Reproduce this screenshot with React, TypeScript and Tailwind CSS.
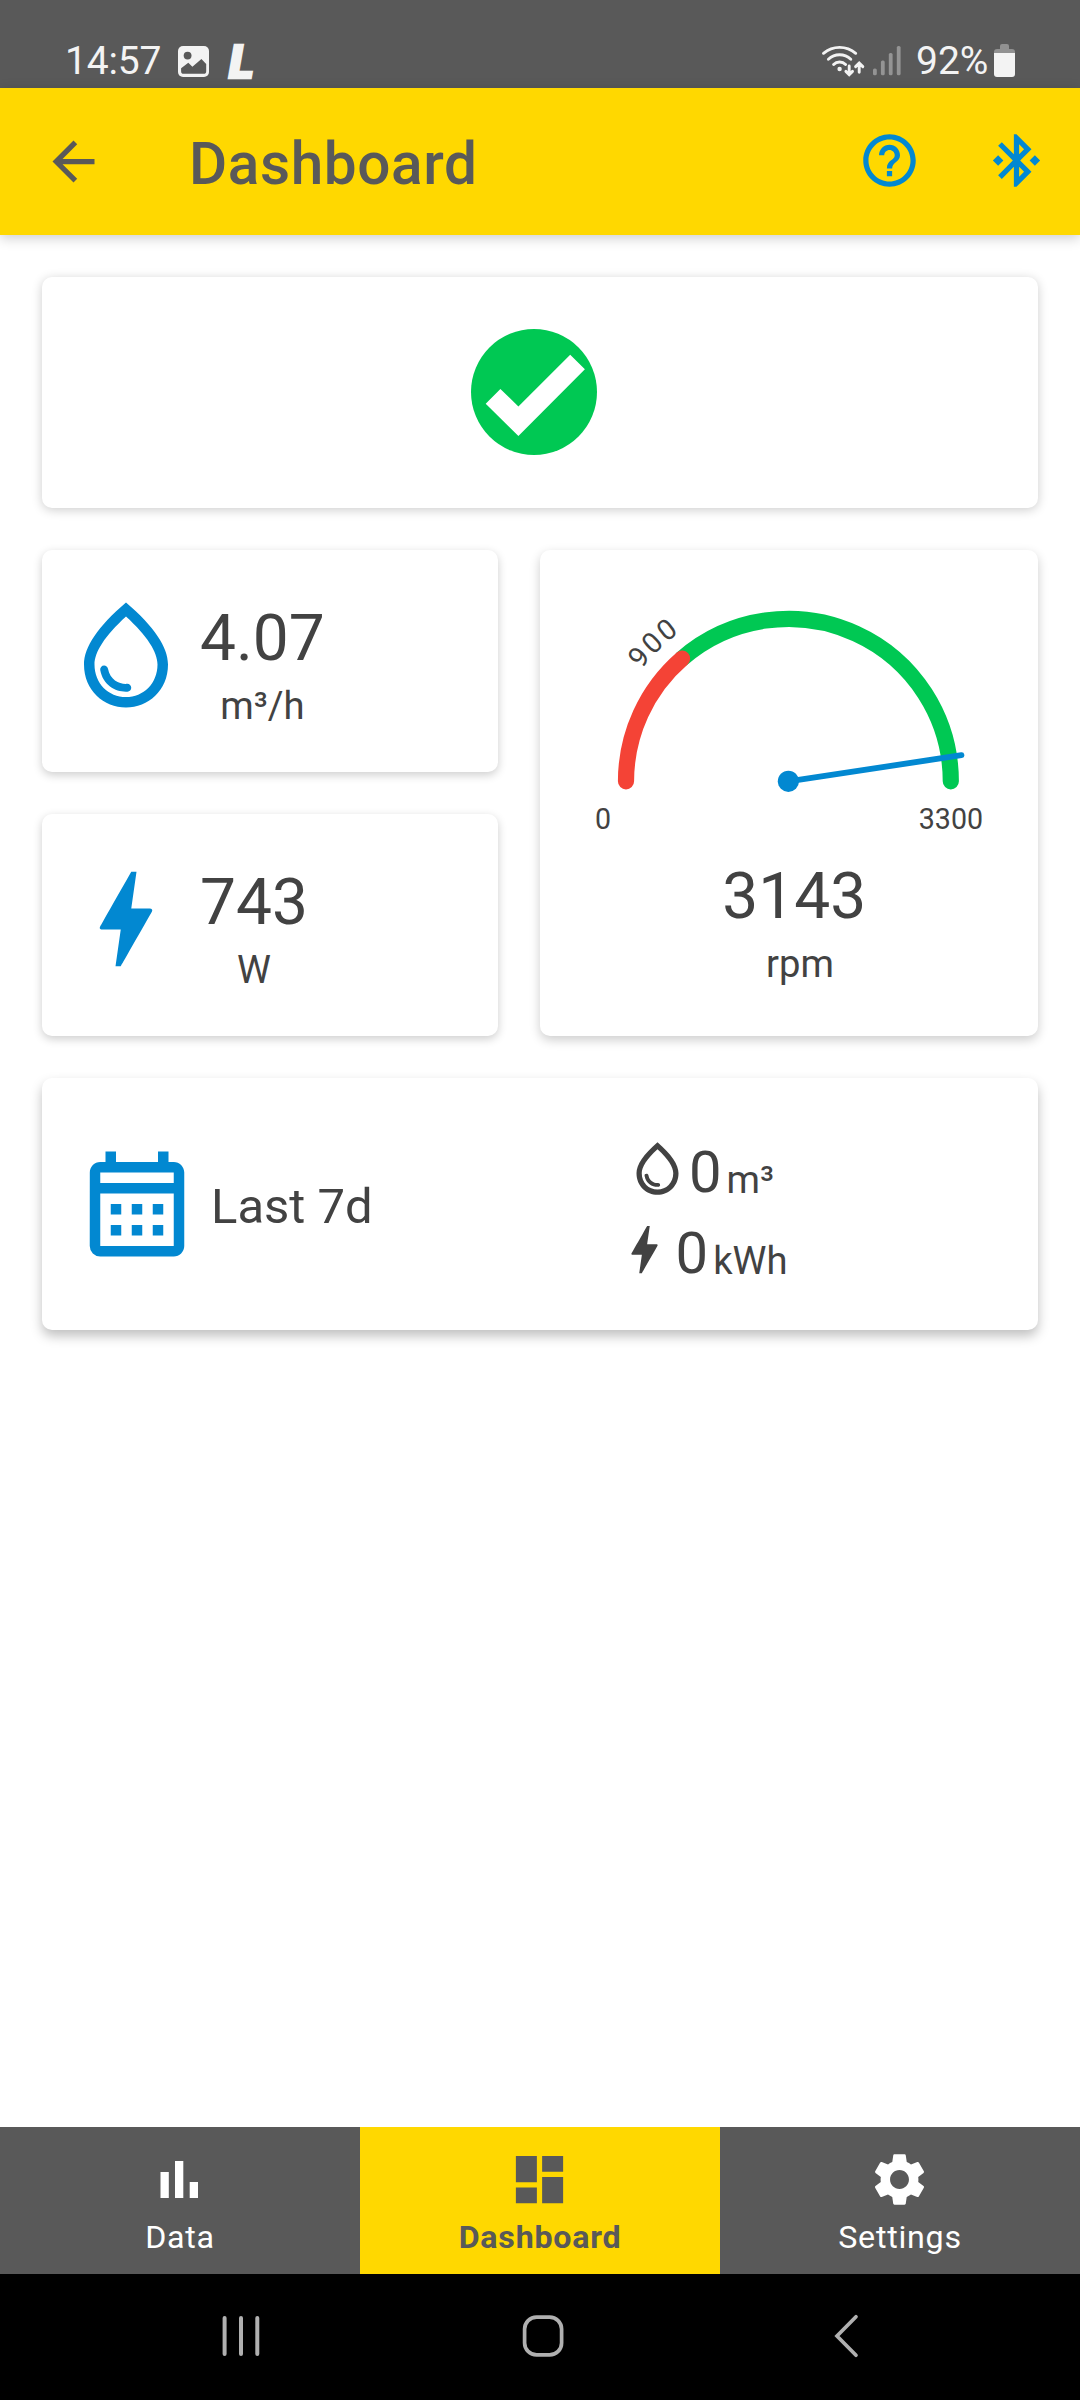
import React from 'react';
import {
    MdArrowBack,
    MdBluetoothConnected,
    MdBolt,
    MdDashboard,
    MdHelpOutline,
    MdOutlineCalendarMonth,
    MdOutlineWaterDrop,
    MdSettings,
} from 'react-icons/md';

const MAX_RPM = 3300;
const MIN_RPM = 900;

const StatusBar: React.FC = () => (
    <div className="flex h-[88px] items-start bg-[#595959] pl-[65px] text-[39px] leading-[46px] text-[#f3f3f3]">
        <span className="mt-[38px] w-[113px] tracking-[-0.2px]">14:57</span>
        <svg className="mt-[46px] h-[31px] w-[31px]" viewBox="0 0 31 31">
            <rect width="31" height="31" rx="5" fill="#f3f3f3" />
            <circle cx="9.6" cy="9.6" r="3.9" fill="#595959" />
            <path d="M3.1 22.3l7.2-5.6 4.1 4 9-7.7 4.8 5v7.2q0 2.6-2.6 2.6H5.7q-2.6 0-2.6-2.6z" fill="#595959" />
        </svg>
        <span className="mt-[37px] ml-5 w-8 text-[47px] leading-[50px] font-black italic [-webkit-text-stroke:2.5px_#f3f3f3]">L</span>
        <svg className="mt-11 ml-[559px] h-[34px] w-[46px]" viewBox="0 0 46 34" fill="none" stroke="#f3f3f3" strokeLinecap="round">
            <g strokeWidth="2.9">
                <path d="M3.5 9.3Q10.5 3.4 19.6 3.4T35.7 9.3" />
                <path d="M8.4 15.2Q13.2 10.7 19.6 10.7T30.8 15.2" />
                <path d="M13.6 20.5Q16 18 19.6 18T25.6 20.5" />
                <path d="M29.2 22V30M25.9 27.4l3.3 3.3 3.3-3.3M39.2 28.2V19.6M35.6 22.6l3.6-3.6 3.6 3.6" />
            </g>
            <circle cx="19.6" cy="25" r="2.2" fill="#f3f3f3" stroke="none" />
        </svg>
        <svg className="mt-11 ml-[7px] h-[34px] w-[28px]" viewBox="0 0 28 34" fill="#949494">
            <rect y="24.5" width="3.8" height="6.8" rx="1.6" />
            <rect x="7.9" y="16.5" width="3.8" height="14.8" rx="1.6" />
            <rect x="15.8" y="9" width="3.8" height="22.3" rx="1.6" />
            <rect x="23.8" y="2" width="3.8" height="29.3" rx="1.6" />
        </svg>
        <span className="mt-[38px] ml-[15px] w-[78px]">92%</span>
        <svg className="mt-11 h-[33px] w-[21px]" viewBox="0 0 21 33">
            <path d="M6 5V2q0-2 2-2h5q2 0 2 2v3h3q3 0 3 3v3H0V8q0-3 3-3z" fill="#919191" />
            <path d="M0 9h21v21q0 3-3 3H3q-3 0-3-3z" fill="#f3f3f3" />
        </svg>
    </div>
);

const Header: React.FC = () => (
    <header className="flex h-[147px] items-start bg-[#ffd800] pt-[41px] pl-[42px] text-[#595959] shadow-[0_3px_12px_rgba(0,0,0,0.2)]">
        <button aria-label="Back" className="mt-[1px]">
            <MdArrowBack className="h-[63px] w-[63px]" />
        </button>
        <h1 className="mt-[1px] ml-[84px] w-[669px] text-[58.5px] leading-[68px] font-medium tracking-[0.6px]">Dashboard</h1>
        <button aria-label="Help" className="text-[#0288d1]">
            <MdHelpOutline className="h-[63px] w-[63px]" />
        </button>
        <button aria-label="Bluetooth" className="ml-16 text-[#0288d1]">
            <MdBluetoothConnected className="h-[63px] w-[63px]" />
        </button>
    </header>
);

interface ReadingProps {
    icon: React.ReactNode;
    value: string;
    unit: string;
}

const Reading: React.FC<ReadingProps> = ({ icon, value, unit }) => (
    <div className="flex h-[222px] items-start rounded-[10px] bg-white pl-[21px] shadow-[0_3px_10px_rgba(0,0,0,0.2)]">
        <div className="mt-[42px] text-[#0288d1]">{icon}</div>
        <div className="mt-[52px] ml-[11px] flex flex-col items-center">
            <span className="text-[64px] leading-[74px]">{value}</span>
            <span className="mt-[9px] text-[38.2px] leading-[43px]">{unit}</span>
        </div>
    </div>
);

// Point on the half circle, from 0 (left end) to 180 degrees (right end)
const onDial = (angle: number, radius: number) => {
    const rad = (angle * Math.PI) / 180;
    return `${248.4 - radius * Math.cos(rad)} ${231.3 - radius * Math.sin(rad)}`;
};

const Gauge: React.FC<{ rpm: number }> = ({ rpm }) => {
    const limit = (MIN_RPM / MAX_RPM) * 180;
    const needle = (rpm / MAX_RPM) * 180;

    return (
        <svg className="h-[300px] w-[498px]" viewBox="0 0 498 300" fill="none" strokeLinecap="round">
            <path d={`M${onDial(limit, 162.4)}A162.4 162.4 0 0 1 ${onDial(180, 162.4)}`} stroke="#00c853" strokeWidth="16.2" />
            <path d={`M${onDial(0, 162.4)}A162.4 162.4 0 0 1 ${onDial(limit, 162.4)}`} stroke="#f44336" strokeWidth="16.2" />
            <path d={`M248.4 231.3L${onDial(needle, 175)}`} stroke="#0288d1" strokeWidth="5.8" />
            <circle cx="248.4" cy="231.3" r="10.6" fill="#0288d1" />
            <path id="limit-path" d={`M${onDial(0, 184.5)}A184.5 184.5 0 0 1 ${onDial(180, 184.5)}`} />
            <g fill="#424242" fontSize="28.6">
                <text letterSpacing="2.4">
                    <textPath href="#limit-path" startOffset="119.8">{MIN_RPM}</textPath>
                </text>
                <text x="55" y="279">0</text>
                <text x="378.8" y="279">{MAX_RPM}</text>
            </g>
        </svg>
    );
};

interface TotalProps {
    icon: React.ReactNode;
    value: string;
    unit: string;
}

const Total: React.FC<TotalProps> = ({ icon, value, unit }) => (
    <div className="flex h-[81px] items-start">
        {icon}
        <div className="mt-[1px] flex items-start">
            <span className="text-[58px] leading-[68px]">{value}</span>
            <span className="mt-[20px] ml-[5px] text-[38.2px] leading-[44px]">{unit}</span>
        </div>
    </div>
);

const NavBar: React.FC = () => (
    <nav className="grid h-[147px] grid-cols-3 bg-[#595959] text-[32.2px] leading-[37px] tracking-[0.75px] text-white">
        <button className="flex flex-col items-center pt-[21px]">
            <svg className="mr-[1px] h-[63px] w-[63px]" viewBox="0 0 63 63" fill="currentColor">
                <rect x="12.5" y="24" width="8.3" height="26" />
                <rect x="27" y="13" width="8.3" height="37" />
                <rect x="41.7" y="34" width="8.3" height="16" />
            </svg>
            <span className="mt-[8px]">Data</span>
        </button>
        <button className="flex flex-col items-center bg-[#ffd800] pt-[21px] font-bold text-[#595959]">
            <MdDashboard className="mr-[1px] h-[63px] w-[63px]" />
            <span className="mt-[8px]">Dashboard</span>
        </button>
        <button className="flex flex-col items-center pt-[21px]">
            <MdSettings className="mr-[1px] h-[63px] w-[63px]" />
            <span className="mt-[8px]">Settings</span>
        </button>
    </nav>
);

const SystemBar: React.FC = () => (
    <div className="flex h-[126px] items-start bg-black pt-10 pl-[219px]">
        <svg className="h-11 w-11" viewBox="0 0 44 44" fill="none" stroke="#b0b0b0" strokeWidth="4" strokeLinecap="round">
            <path d="M5.6 4V40M22 4V40M38.3 4V40" />
        </svg>
        <svg className="ml-[258px] h-11 w-11" viewBox="0 0 44 44" fill="none" stroke="#b0b0b0" strokeWidth="3.7">
            <rect x="3.6" y="3.1" width="37" height="37.8" rx="12" />
        </svg>
        <svg className="ml-[259px] h-11 w-11" viewBox="0 0 44 44" fill="none" stroke="#b0b0b0" strokeWidth="3.7" strokeLinecap="round">
            <path d="M32 2.8L13 22L32 41.2" />
        </svg>
    </div>
);

export default function App() {
    return (
        <div className="flex h-[2400px] w-[1080px] flex-col bg-white font-[Roboto,sans-serif] text-[#424242]">
            <StatusBar />
            <Header />

            <main className="flex flex-1 flex-col gap-[42px] px-[42px] pt-[42px]">
                <section className="flex h-[231px] items-start justify-center rounded-[10px] bg-white pt-[52px] pr-3 shadow-[0_2px_11px_rgba(0,0,0,0.2)]">
                    <svg className="h-[126px] w-[126px]" viewBox="0 0 126 126">
                        <circle cx="63" cy="63" r="63" fill="#00c853" />
                        <path d="M14.7 74.7L29.4 59.9L47.4 77.5L99.2 25.7L113.9 40.3L47.4 107Z" fill="#fff" />
                    </svg>
                </section>

                <div className="grid grid-cols-[456px_498px] gap-[42px]">
                    <div className="flex flex-col gap-[42px]">
                        <Reading icon={<MdOutlineWaterDrop className="h-[126px] w-[126px]" />} value="4.07" unit="m³/h" />
                        <Reading icon={<MdBolt className="h-[126px] w-[126px]" />} value="743" unit="W" />
                    </div>
                    <section className="flex h-[486px] flex-col items-center rounded-[10px] bg-white shadow-[0_4px_11px_rgba(0,0,0,0.2)]">
                        <Gauge rpm={3143} />
                        <span className="mt-[10px] pl-[10.5px] text-[64px] leading-[74px]">3143</span>
                        <span className="mt-[9px] pl-[22px] text-[38.2px] leading-[43px]">rpm</span>
                    </section>
                </div>

                <section className="grid h-[252px] grid-cols-[498px_1fr] rounded-[10px] bg-white shadow-[0_6px_12px_rgba(0,0,0,0.25)]">
                    <div className="flex items-center pl-8">
                        <MdOutlineCalendarMonth className="h-[126px] w-[126px] text-[#0288d1]" />
                        <span className="mt-[5px] ml-[11px] text-[49px] leading-[56px]">Last 7d</span>
                    </div>
                    <div className="flex w-[320px] flex-col items-center pt-[59px]">
                        <Total icon={<MdOutlineWaterDrop className="h-[63px] w-[63px]" />} value="0" unit="m³" />
                        <Total icon={<MdBolt className="h-[63px] w-[63px]" />} value="0" unit="kWh" />
                    </div>
                </section>
            </main>

            <NavBar />
            <SystemBar />
        </div>
    );
}
